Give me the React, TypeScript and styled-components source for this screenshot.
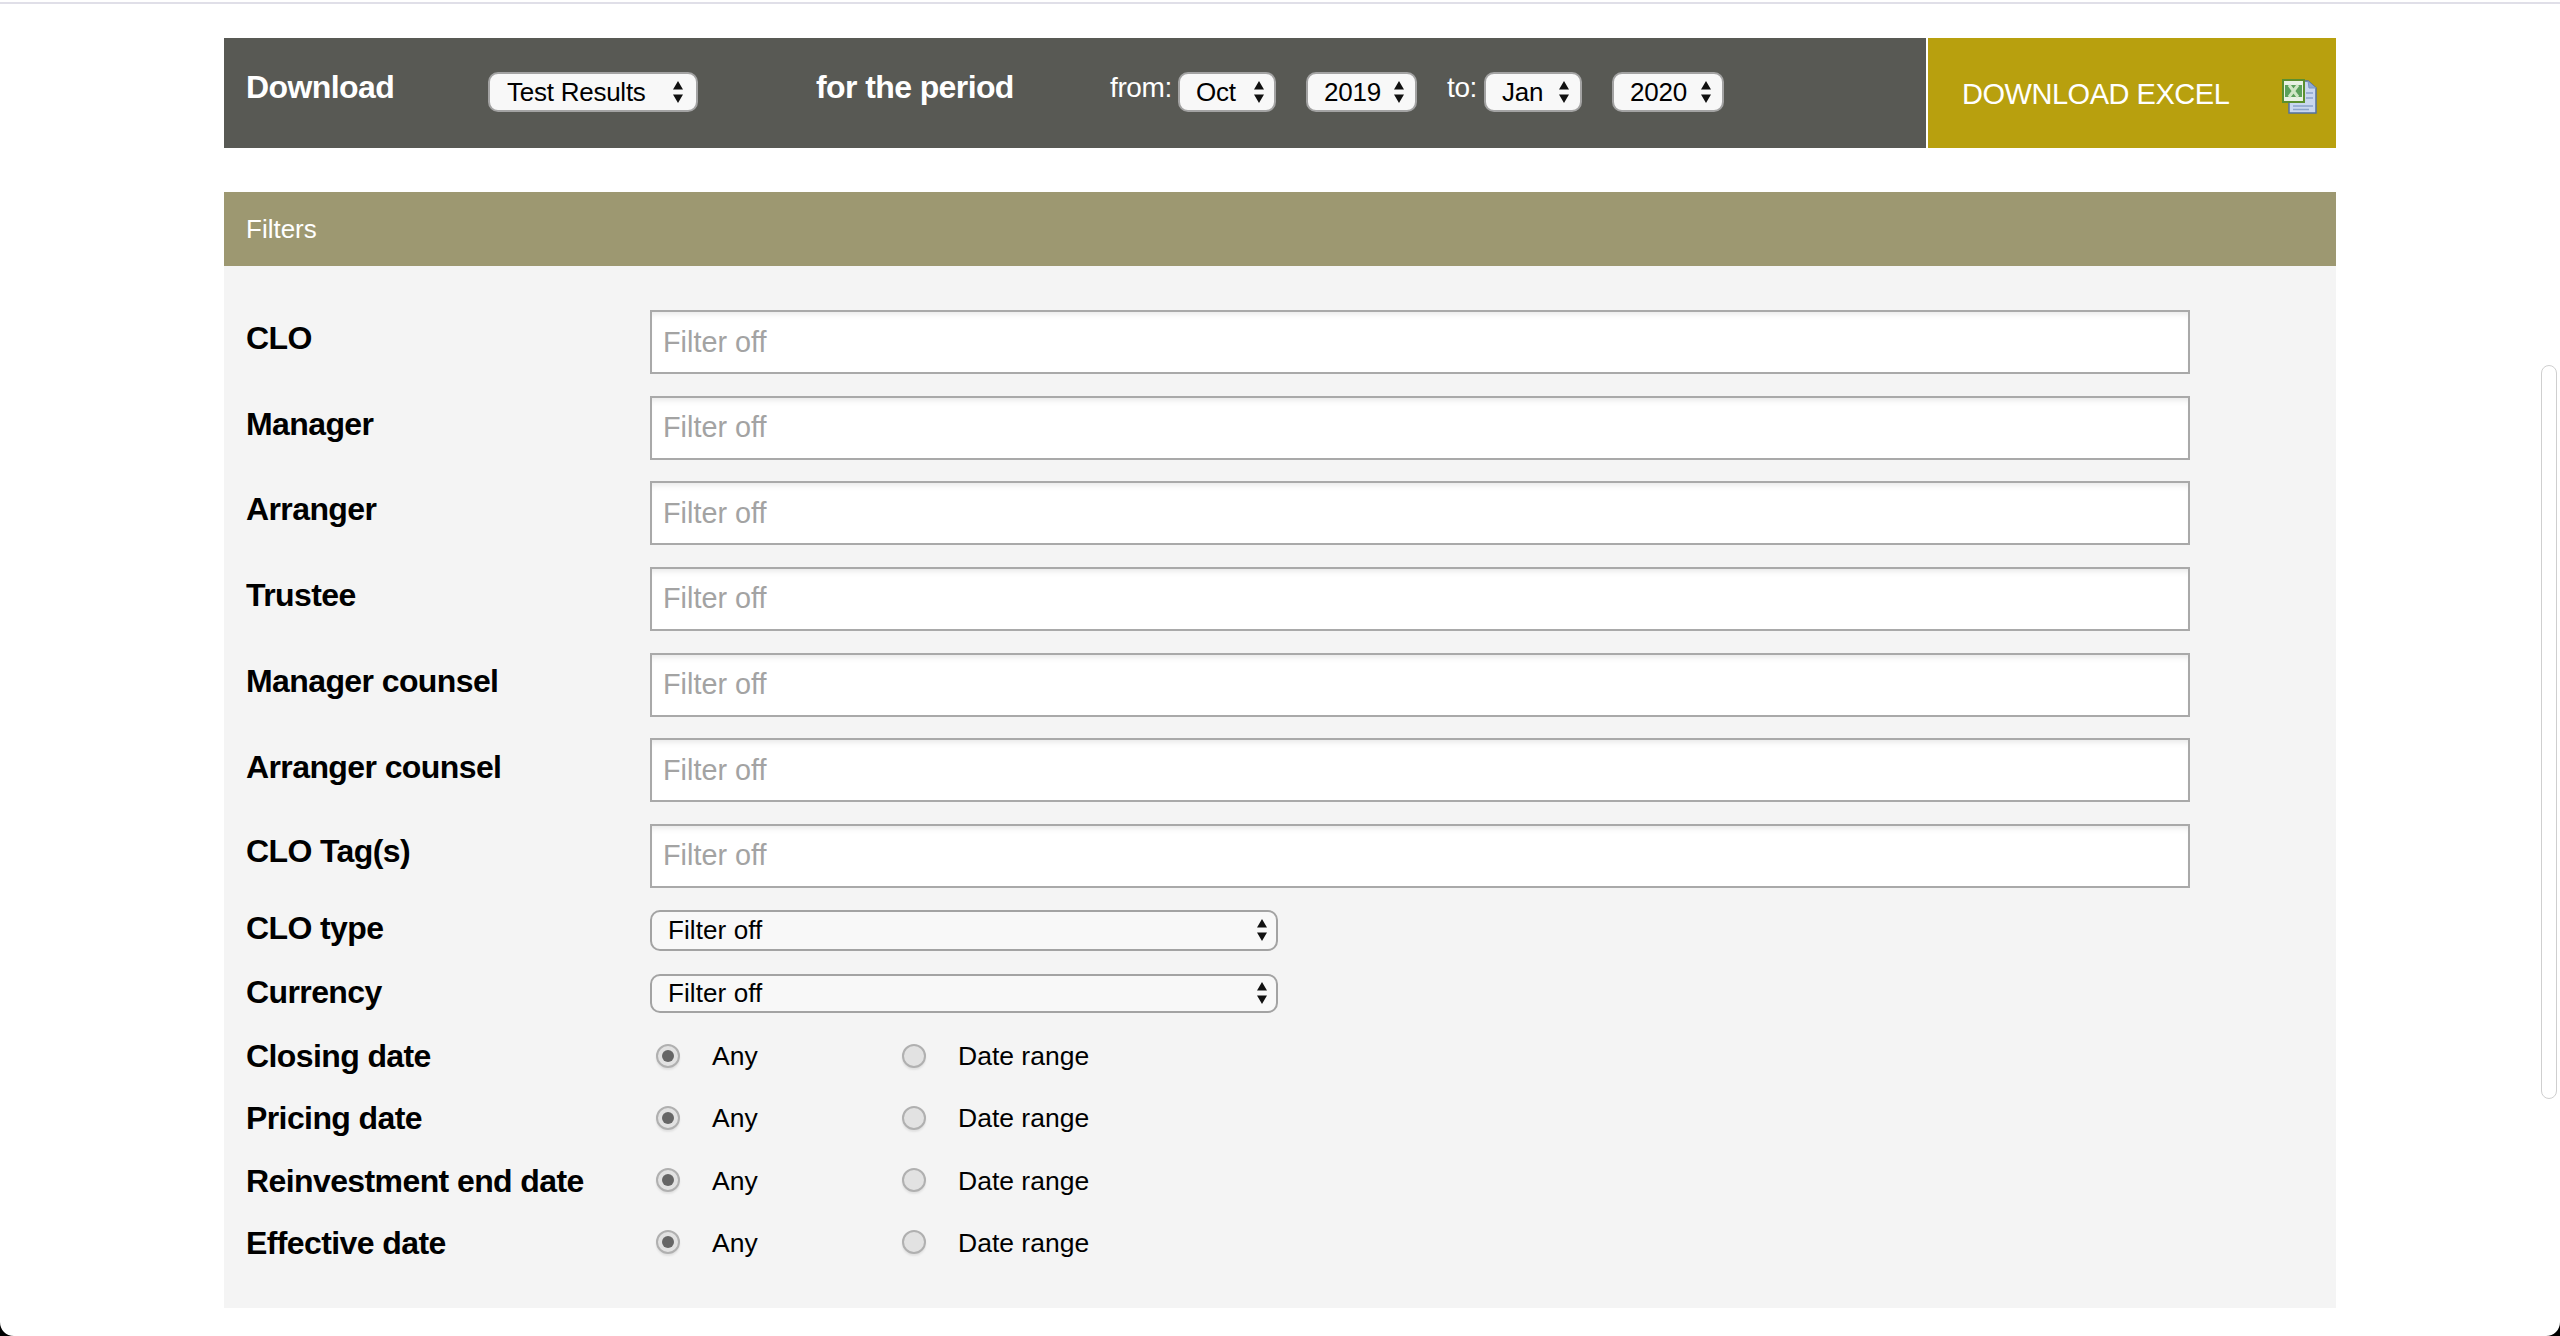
import React from 'react';
import styled, { createGlobalStyle } from 'styled-components';

const Global = createGlobalStyle`
  html, body { margin: 0; padding: 0; background: #fff; height: 1336px; overflow: hidden; }
  body { font-family: "Liberation Sans", Arial, sans-serif; color: #000; }
`;

const Page = styled.div`
  position: relative;
  width: 2560px;
  height: 1336px;
  overflow: hidden;
  border-top: 2px solid #fff;
  box-sizing: border-box;
  &::before {
    content: '';
    display: block;
    height: 2px;
    background: #e0dfe8;
  }
`;

const Container = styled.main`
  width: 2112px;
  margin: 34px 0 0 224px;
`;

const Toolbar = styled.section`
  display: flex;
  height: 110px;
  margin-bottom: 44px;
`;

const ToolbarMain = styled.div`
  flex: 1;
  background: #585954;
  display: flex;
  align-items: flex-start;
  padding: 34px 0 0 22px;
  color: #fff;
`;

const ToolbarTitle = styled.h2<{ $w: number }>`
  margin: -3px 0 0;
  width: ${p => p.$w}px;
  font-size: 32px;
  line-height: 36px;
  font-weight: 700;
  letter-spacing: -0.6px;
  flex: none;
`;

const PeriodLabel = styled.span<{ $w: number }>`
  width: ${p => p.$w}px;
  margin-top: -2px;
  flex: none;
  font-size: 28px;
  line-height: 36px;
  letter-spacing: -0.4px;
`;

const DownloadButton = styled.button`
  width: 408px;
  margin-left: 2px;
  flex: none;
  border: 0;
  background: #b8a00e;
  color: #fff;
  font: 400 29px/36px "Liberation Sans", Arial, sans-serif;
  letter-spacing: -0.47px;
  white-space: nowrap;
  display: flex;
  align-items: flex-start;
  padding: 38px 19px 0 34px;
`;

const ExcelIcon = styled.svg`
  width: 35px;
  height: 35px;
  margin: 3px 0 0 auto;
  flex: none;
`;

const SelectWrap = styled.div<{ $w: number; $h?: number; $mr?: number }>`
  position: relative;
  width: ${p => p.$w}px;
  height: ${p => p.$h ?? 40}px;
  margin-right: ${p => p.$mr ?? 0}px;
  flex: none;
`;

const NativeSelect = styled.select<{ $pad?: number; $ls: number }>`
  appearance: none;
  -webkit-appearance: none;
  width: 100%;
  height: 100%;
  box-sizing: border-box;
  border: 2px solid #a3a3a3;
  border-radius: 10px;
  background: #f8f8f8;
  color: #000;
  font: 400 26px "Liberation Sans", Arial, sans-serif;
  letter-spacing: ${p => p.$ls}px;
  padding: 0 0 0 ${p => p.$pad ?? 16}px;
  margin: 0;
  outline: none;
`;

const Arrows = styled.svg<{ $r: number }>`
  position: absolute;
  top: 50%;
  right: ${p => p.$r}px;
  width: 12px;
  height: 22px;
  transform: translateY(-50%);
  pointer-events: none;
`;

const FiltersBar = styled.h3`
  margin: 0;
  height: 74px;
  background: #9d9871;
  color: #fff;
  font-size: 26px;
  line-height: 74px;
  font-weight: 400;
  padding-left: 22px;
`;

const Panel = styled.form`
  background: #f4f4f4;
  height: 1042px;
  padding: 44px 0 0 22px;
  box-sizing: border-box;
`;

const Row = styled.div<{ $h: number }>`
  display: flex;
  align-items: flex-start;
  height: ${p => p.$h}px;
`;

const Label = styled.label<{ $top: number }>`
  width: 404px;
  flex: none;
  font-size: 32px;
  line-height: 36px;
  font-weight: 700;
  letter-spacing: -0.6px;
  padding-top: ${p => p.$top}px;
`;

const TextInput = styled.input`
  width: 1540px;
  height: 64px;
  box-sizing: border-box;
  border: 2px solid #a9a9a9;
  background: #fff;
  box-shadow: inset 0 6px 6px -4px rgba(0, 0, 0, 0.1);
  padding: 0 11px;
  font: 400 28.8px "Liberation Sans", Arial, sans-serif;
  color: #000;
  outline: none;
  &::placeholder { color: #a3a3a3; opacity: 1; }
`;

const RadioGroup = styled.div`
  display: flex;
  align-items: center;
  width: 246px;
  height: 36px;
  padding-left: 6px;
  box-sizing: border-box;
`;

const RadioInput = styled.input`
  appearance: none;
  -webkit-appearance: none;
  width: 24px;
  height: 24px;
  margin: 0 32px 0 0;
  flex: none;
  box-sizing: border-box;
  border-radius: 50%;
  border: 2px solid #b0b0b0;
  background: #e2e2e2;
  box-shadow: 0 2px 2px rgba(0, 0, 0, 0.08);
  position: relative;
  &:checked::after {
    content: '';
    position: absolute;
    left: 4px;
    top: 4px;
    width: 12px;
    height: 12px;
    border-radius: 50%;
    background: #666;
  }
`;

const RadioText = styled.span<{ $dy: number }>`
  font-size: 26.5px;
  line-height: 36px;
  padding-top: ${p => p.$dy}px;
`;

const ScrollTrack = styled.div`
  position: absolute;
  left: 2541px;
  top: 363px;
  width: 16px;
  height: 734px;
  box-sizing: border-box;
  border: 1px solid #cfcfcf;
  border-radius: 8px;
  background: #fff;
`;

const Corner = styled.svg<{ $side: 'left' | 'right' }>`
  position: absolute;
  bottom: 0;
  ${p => p.$side}: 0;
  width: 14px;
  height: 14px;
`;

const StackArrows: React.FC<{ r: number }> = ({ r }) => (
  <Arrows $r={r} viewBox="0 0 12 22" aria-hidden>
    <path d="M6 0 L11 8.5 H1 Z M6 22 L11 13.5 H1 Z" fill="#111" />
  </Arrows>
);

const Select: React.FC<{ w: number; h?: number; mr?: number; pad?: number; r?: number; ls?: number; value: string }> = ({
  w,
  h,
  mr,
  pad,
  r = 12,
  ls = -0.25,
  value,
}) => (
  <SelectWrap $w={w} $h={h} $mr={mr}>
    <NativeSelect $pad={pad} $ls={ls} defaultValue={value}>
      <option>{value}</option>
    </NativeSelect>
    <StackArrows r={r} />
  </SelectWrap>
);

const textFilters: [string, number][] = [
  ['CLO', 10],
  ['Manager', 10],
  ['Arranger', 10],
  ['Trustee', 10],
  ['Manager counsel', 10],
  ['Arranger counsel', 11],
  ['CLO Tag(s)', 9],
];

const dateFilters: [string, number, number][] = [
  ['Closing date', 0, 0],
  ['Pricing date', 0, 0],
  ['Reinvestment end date', 1, 2],
  ['Effective date', 1, 2],
];

const Excel = () => (
  <ExcelIcon viewBox="0 0 35 35" aria-hidden>
    <path d="M7 2 H26 L34 9 V34 H7 Z" fill="#c9d7ef" stroke="#53719f" strokeWidth="1.5" />
    <path d="M26 2 L27 9 H34" fill="#8fa9d2" stroke="#7d97c2" strokeWidth="1" />
    <path d="M24 14 H31 M24 19 H31 M11 27 H31 M11 30.5 H27" stroke="#8aa4cc" strokeWidth="1.5" />
    <rect x="1" y="1" width="21" height="22" fill="#e9f2e4" stroke="#5a8f2e" strokeWidth="2" />
    <rect x="3" y="6" width="17" height="12" fill="#5aa05a" />
    <path d="M7 6 L16 18 M16 6 L7 18" stroke="#cfe6c5" strokeWidth="3" />
  </ExcelIcon>
);

export default function App() {
  return (
    <Page>
      <Global />
      <Container>
        <Toolbar>
          <ToolbarMain>
            <ToolbarTitle $w={242}>Download</ToolbarTitle>
            <Select w={210} mr={118} pad={17} r={14} value="Test Results" />
            <ToolbarTitle $w={294}>for the period</ToolbarTitle>
            <PeriodLabel $w={68}>from:</PeriodLabel>
            <Select w={98} mr={30} r={11} value="Oct" />
            <Select w={111} mr={30} value="2019" />
            <PeriodLabel $w={37}>to:</PeriodLabel>
            <Select w={98} mr={30} value="Jan" />
            <Select w={112} value="2020" />
          </ToolbarMain>
          <DownloadButton type="button">
            DOWNLOAD EXCEL
            <Excel />
          </DownloadButton>
        </Toolbar>
        <FiltersBar>Filters</FiltersBar>
        <Panel>
          {textFilters.map(([name, top]) => (
            <Row key={name} $h={85.67}>
              <Label $top={top}>{name}</Label>
              <TextInput placeholder="Filter off" />
            </Row>
          ))}
          <Row $h={64}>
            <Label $top={0}>CLO type</Label>
            <Select w={628} h={41} pad={16} r={10} ls={0.1} value="Filter off" />
          </Row>
          <Row $h={64}>
            <Label $top={0}>Currency</Label>
            <Select w={628} h={39} pad={16} r={10} ls={0.1} value="Filter off" />
          </Row>
          {dateFilters.map(([name, top, dy]) => (
            <Row key={name} $h={62}>
              <Label $top={top}>{name}</Label>
              <RadioGroup>
                <RadioInput type="radio" name={name} defaultChecked />
                <RadioText $dy={dy}>Any</RadioText>
              </RadioGroup>
              <RadioGroup>
                <RadioInput type="radio" name={name} />
                <RadioText $dy={dy}>Date range</RadioText>
              </RadioGroup>
            </Row>
          ))}
        </Panel>
      </Container>
      <ScrollTrack />
      <Corner $side="left" viewBox="0 0 14 14" aria-hidden>
        <path d="M0 0 C0 8 6 14 14 14 H0 Z" fill="#000" />
      </Corner>
      <Corner $side="right" viewBox="0 0 14 14" aria-hidden>
        <path d="M14 0 C14 8 8 14 0 14 H14 Z" fill="#000" />
      </Corner>
    </Page>
  );
}
